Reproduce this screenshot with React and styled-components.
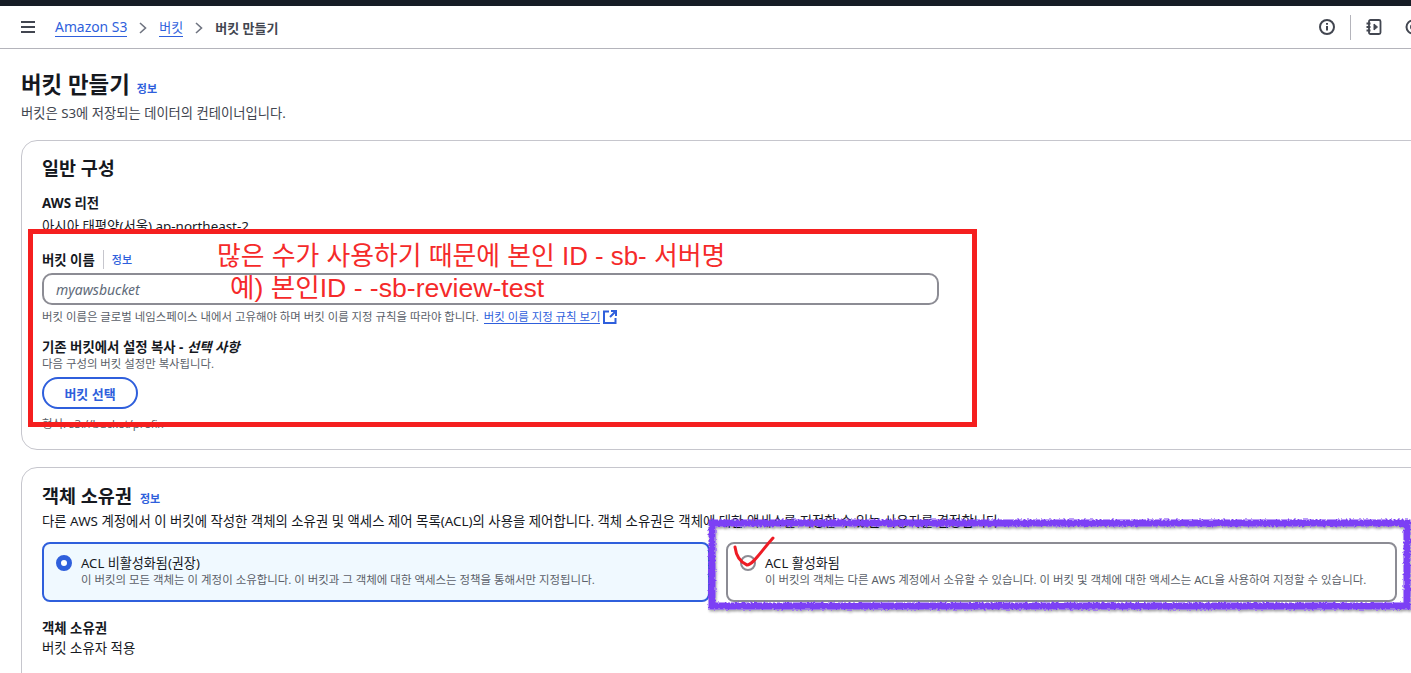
import styled, { createGlobalStyle } from "styled-components";

const GlobalStyle = createGlobalStyle`
  html, body {
    margin: 0;
    padding: 0;
    background: #fff;
    overflow: hidden;
  }
  body {
    font-family: "Noto Sans", "Noto Sans CJK KR", sans-serif;
    color: #16191f;
  }
  * {
    box-sizing: border-box;
  }
`;

const Page = styled.div`
  position: relative;
  width: 1411px;
  height: 673px;
  overflow: hidden;
`;

const TopStrip = styled.div`
  height: 6px;
  background: #161d26;
`;

const NavBar = styled.nav`
  height: 43px;
  display: flex;
  align-items: center;
  padding: 0 0 0 21px;
  border-bottom: 1px solid #b4b4bb;
`;

const IconButton = styled.button`
  display: flex;
  flex: none;
  padding: 0;
  margin-left: ${({ $ml }) => $ml || 0}px;
  border: 0;
  background: none;
  color: #424650;
`;

const Crumbs = styled.div`
  display: flex;
  align-items: center;
  gap: 12px;
  margin-left: 20px;
  padding-top: 1px;
  font-size: 13.9px;
  flex: 1;
`;

const CrumbLink = styled.a`
  color: #2f5fdc;
  font-size: ${({ $size }) => $size || 13.9}px;
  line-height: 18px;
  border-bottom: 1px solid #2f5fdc;
`;

const CrumbCurrent = styled.span`
  color: #424650;
  font-weight: 600;
  font-size: 13px;
`;

const NavTools = styled.div`
  display: flex;
  align-items: center;
  gap: 15px;
  width: 95px;
  flex: none;
  margin-right: -3px;
`;

const ToolDivider = styled.div`
  width: 1px;
  height: 25px;
  flex: none;
  background: #b4b4bb;
`;

const Main = styled.main`
  padding: 19px 0 0 21px;
  width: 1440px;
`;

const PageTitle = styled.div`
  display: flex;
  align-items: baseline;
  gap: 7px;
  height: 34px;
`;

const H1 = styled.h1`
  margin: 0;
  font-size: 22.4px;
  line-height: 34px;
  font-weight: 700;
  color: #16191f;
`;

const InfoLink = styled.a`
  color: #2f5fdc;
  font-size: 11px;
  font-weight: ${({ $bold }) => ($bold ? 600 : 500)};
`;

const PageDesc = styled.p`
  margin: 2px 0 18px;
  font-size: 13.3px;
  line-height: 18px;
  color: #424650;
`;

const Card = styled.section`
  height: ${({ $h }) => $h}px;
  margin-bottom: 17px;
  padding: ${({ $top }) => $top}px 0 0 20px;
  border: 1px solid #c6c6cd;
  border-radius: 16px;
  background: #fff;
`;

const CardTitle = styled.h2`
  display: flex;
  align-items: baseline;
  gap: 8px;
  margin: 0;
  font-size: 18.5px;
  line-height: 26px;
  font-weight: 700;
`;

const Label = styled.div`
  display: flex;
  align-items: center;
  font-size: 13.4px;
  line-height: 18px;
  font-weight: 700;
  color: #16191f;
  margin-top: ${({ $mt }) => $mt || 0}px;
  em {
    font-style: italic;
  }
`;

const Value = styled.div`
  font-size: 13.4px;
  line-height: 18px;
  color: #16191f;
  white-space: nowrap;
  margin-top: ${({ $mt }) => $mt || 0}px;
`;

const LabelDivider = styled.span`
  width: 1px;
  height: 19px;
  margin: 0 8px;
  background: #c6c6cd;
`;

const TextInput = styled.div`
  display: flex;
  align-items: center;
  width: 897px;
  height: 32px;
  margin-top: 4px;
  padding-left: 12px;
  border: 2px solid #8c8c94;
  border-radius: 10px;
  font-size: 14px;
  font-style: italic;
  color: #5f6b7a;
`;

const Hint = styled.div`
  display: flex;
  align-items: center;
  gap: 5px;
  font-size: 11.4px;
  line-height: 16px;
  color: #5b5f69;
  margin-top: ${({ $mt }) => $mt || 0}px;
`;

const HintLink = styled.a`
  color: #2f5fdc;
  border-bottom: 1px solid #2f5fdc;
  line-height: 13px;
`;

const ExternalWrap = styled.span`
  display: flex;
  margin-left: -2px;
`;

const OutlineButton = styled.button`
  display: block;
  width: 96px;
  height: 32px;
  margin-top: 5px;
  padding: 0;
  border: 2px solid #2f5fdc;
  border-radius: 16px;
  background: #fff;
  color: #2f5fdc;
  font-family: inherit;
  font-size: 13px;
  font-weight: 700;
`;

const TileRow = styled.div`
  display: flex;
  gap: 16px;
  margin-top: 12px;
`;

const Tile = styled.div`
  display: flex;
  gap: 9px;
  width: ${({ $w }) => $w}px;
  height: 60px;
  padding: 10px 0 0 12px;
  border: 2px solid ${({ $active }) => ($active ? "#2f5fdc" : "#8c8c94")};
  border-radius: 8px;
  background: ${({ $active }) => ($active ? "#f0f9ff" : "#fff")};
`;

const Radio = styled.span`
  flex: none;
  width: 16px;
  height: 16px;
  margin-top: 1px;
  border-radius: 50%;
  background: #fff;
  border: ${({ $on }) => ($on ? "5px solid #2f5fdc" : "2px solid #8c8c94")};
`;

const TileTitle = styled.div`
  font-size: 13.1px;
  line-height: 18px;
  color: #16191f;
`;

const TileDesc = styled.div`
  font-size: 11.45px;
  line-height: 15px;
  color: #5b5f69;
  white-space: nowrap;
`;

const RedBox = styled.div`
  position: absolute;
  left: 28px;
  top: 229px;
  width: 949px;
  height: 198px;
  border: 5px solid #f51f1f;
`;

const RedNote = styled.div`
  position: absolute;
  left: ${({ $x }) => $x}px;
  top: ${({ $y }) => $y}px;
  font-family: "Liberation Sans", "Noto Sans CJK KR", sans-serif;
  font-size: ${({ $size }) => $size}px;
  line-height: 30px;
  color: #f52a2a;
  white-space: nowrap;
`;

const MarkerLayer = styled.svg`
  position: absolute;
  left: 0;
  top: 0;
`;

function Menu() {
  return (
    <svg width="14" height="12" viewBox="0 0 14 12" fill="none" stroke="currentColor" strokeWidth="2">
      <path d="M0 1h14M0 6h14M0 11h14" />
    </svg>
  );
}

function Chevron() {
  return (
    <svg width="8" height="12" viewBox="0 0 8 12" fill="none" stroke="#6f7480" strokeWidth="1.6">
      <path d="M1 1l5.5 5L1 11" />
    </svg>
  );
}

function InfoIcon() {
  return (
    <svg width="16" height="16" viewBox="0 0 16 16" fill="none" stroke="currentColor" strokeWidth="2">
      <circle cx="8" cy="8" r="7" />
      <path d="M8 7v4.5" />
      <path d="M8 4v1.8" />
    </svg>
  );
}

function NotebookIcon() {
  return (
    <svg width="16" height="16" viewBox="0 0 16 16" fill="none" stroke="currentColor" strokeWidth="1.8">
      <rect x="3" y="1" width="11.5" height="14" rx="1.5" />
      <path d="M0.5 4.5h4M0.5 8h4M0.5 11.5h4" />
      <path d="M8 5l3.5 3L8 11z" fill="currentColor" strokeWidth="1" />
    </svg>
  );
}

function SettingsIcon() {
  return (
    <svg width="16" height="16" viewBox="0 0 16 16" fill="none" stroke="currentColor" strokeWidth="2">
      <circle cx="8" cy="8" r="6.5" />
      <circle cx="8" cy="8" r="2" />
    </svg>
  );
}

function ExternalIcon() {
  return (
    <svg width="14" height="14" viewBox="0 0 14 14" fill="none" stroke="#2f5fdc" strokeWidth="2">
      <path d="M6 1.5H1v11.5h11.5V8" />
      <path d="M8 1h5v5M13 1L7 7" />
    </svg>
  );
}

function Markers() {
  return (
    <MarkerLayer width="1411" height="673" viewBox="0 0 1411 673" fill="none">
      <defs>
        <filter id="rough" x="-5%" y="-20%" width="110%" height="140%">
          <feTurbulence type="fractalNoise" baseFrequency="0.5" numOctaves="2" seed="4" result="noise" />
          <feDisplacementMap in="SourceGraphic" in2="noise" scale="4" xChannelSelector="R" yChannelSelector="G" result="moved" />
          <feDropShadow dx="1" dy="2" stdDeviation="1.2" floodColor="#000" floodOpacity="0.35" />
        </filter>
      </defs>
      <path
        d="M712 523H1407V606H712Z"
        stroke="#7b3ff5"
        strokeWidth="7"
        filter="url(#rough)"
      />
      <path
        d="M735 547C736 555 740 562 747 565C753 565 762 550 773 538"
        stroke="#ee1c25"
        strokeWidth="3"
        strokeLinecap="round"
      />
    </MarkerLayer>
  );
}

export default function App() {
  return (
    <Page>
      <GlobalStyle />
      <TopStrip />
      <NavBar>
        <IconButton>
          <Menu />
        </IconButton>
        <Crumbs>
          <CrumbLink>Amazon S3</CrumbLink>
          <Chevron />
          <CrumbLink $size={13}>버킷</CrumbLink>
          <Chevron />
          <CrumbCurrent>버킷 만들기</CrumbCurrent>
        </Crumbs>
        <NavTools>
          <IconButton>
            <InfoIcon />
          </IconButton>
          <ToolDivider />
          <IconButton>
            <NotebookIcon />
          </IconButton>
          <IconButton $ml={8}>
            <SettingsIcon />
          </IconButton>
        </NavTools>
      </NavBar>

      <Main>
        <PageTitle>
          <H1>버킷 만들기</H1>
          <InfoLink $bold>정보</InfoLink>
        </PageTitle>
        <PageDesc>버킷은 S3에 저장되는 데이터의 컨테이너입니다.</PageDesc>

        <Card $h={310} $top={14}>
          <CardTitle>일반 구성</CardTitle>
          <Label $mt={13}>AWS 리전</Label>
          <Value $mt={5}>아시아 태평양(서울) ap-northeast-2</Value>
          <Label $mt={15}>
            버킷 이름
            <LabelDivider />
            <InfoLink>정보</InfoLink>
          </Label>
          <TextInput>myawsbucket</TextInput>
          <Hint $mt={4}>
            버킷 이름은 글로벌 네임스페이스 내에서 고유해야 하며 버킷 이름 지정 규칙을 따라야 합니다.
            <HintLink>버킷 이름 지정 규칙 보기</HintLink>
            <ExternalWrap>
              <ExternalIcon />
            </ExternalWrap>
          </Hint>
          <Label $mt={13}>
            기존 버킷에서 설정 복사 -&nbsp;<em>선택 사항</em>
          </Label>
          <Hint>다음 구성의 버킷 설정만 복사됩니다.</Hint>
          <OutlineButton>버킷 선택</OutlineButton>
          <Hint $mt={7}>형식: s3://bucket/prefix</Hint>
        </Card>

        <Card $h={260} $top={15}>
          <CardTitle>
            객체 소유권
            <InfoLink $bold>정보</InfoLink>
          </CardTitle>
          <Value>
            다른 AWS 계정에서 이 버킷에 작성한 객체의 소유권 및 액세스 제어 목록(ACL)의 사용을 제어합니다. 객체 소유권은 객체에 대한 액세스를 지정할 수 있는 사용자를 결정합니다.
          </Value>
          <TileRow>
            <Tile $active $w={668}>
              <Radio $on />
              <div>
                <TileTitle>ACL 비활성화됨(권장)</TileTitle>
                <TileDesc>이 버킷의 모든 객체는 이 계정이 소유합니다. 이 버킷과 그 객체에 대한 액세스는 정책을 통해서만 지정됩니다.</TileDesc>
              </div>
            </Tile>
            <Tile $w={671}>
              <Radio />
              <div>
                <TileTitle>ACL 활성화됨</TileTitle>
                <TileDesc>이 버킷의 객체는 다른 AWS 계정에서 소유할 수 있습니다. 이 버킷 및 객체에 대한 액세스는 ACL을 사용하여 지정할 수 있습니다.</TileDesc>
              </div>
            </Tile>
          </TileRow>
          <Label $mt={17}>객체 소유권</Label>
          <Value $mt={2}>버킷 소유자 적용</Value>
        </Card>
      </Main>

      <RedBox />
      <RedNote $x={217} $y={241} $size={25.85}>많은 수가 사용하기 때문에 본인 ID - sb- 서버명</RedNote>
      <RedNote $x={230} $y={273} $size={26.6}>예) 본인ID - -sb-review-test</RedNote>
      <Markers />
    </Page>
  );
}
